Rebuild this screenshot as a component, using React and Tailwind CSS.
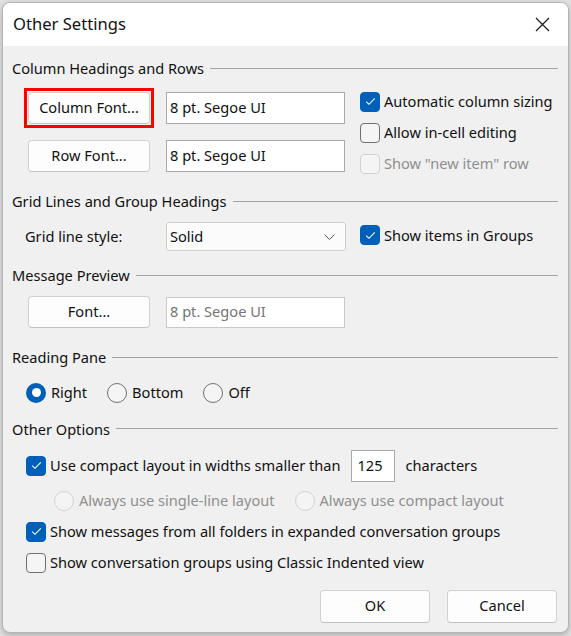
import React from 'react';

// Win11-style "Other Settings" dialog (Outlook view settings)

const Checkbox = ({ checked, disabled }) => (
  <span
    className={
      checked
        ? 'flex h-[20px] w-[20px] shrink-0 items-center justify-center rounded-[4px] border border-[#005fb8] bg-[#005fb8]'
        : disabled
        ? 'flex h-[20px] w-[20px] shrink-0 items-center justify-center rounded-[4px] border border-[#d2d2d2] bg-[#f4f4f4]'
        : 'flex h-[20px] w-[20px] shrink-0 items-center justify-center rounded-[4px] border border-[#707070] bg-[#f5f5f5]'
    }
  >
    {checked && (
      <svg width="11" height="9" viewBox="0 0 11 9">
        <path d="M1.2 4.6 4 7.3 9.8 1.4" fill="none" stroke="#fff" strokeWidth="1.1" />
      </svg>
    )}
  </span>
);

const Radio = ({ checked, disabled }) => (
  <span
    className={
      checked
        ? 'flex h-[20px] w-[20px] shrink-0 items-center justify-center rounded-full bg-[#005fb8]'
        : disabled
        ? 'flex h-[20px] w-[20px] shrink-0 items-center justify-center rounded-full border border-[#d2d2d2] bg-[#f4f4f4]'
        : 'flex h-[20px] w-[20px] shrink-0 items-center justify-center rounded-full border border-[#707070] bg-[#f5f5f5]'
    }
  >
    {checked && <span className="h-[9px] w-[9px] rounded-full bg-white" />}
  </span>
);

const CheckRow = ({ checked, disabled, label, className = '' }) => (
  <div className={`flex items-center gap-[4px] ${className}`}>
    <Checkbox checked={checked} disabled={disabled} />
    <span className={disabled ? 'text-[#8f8f8f]' : 'text-[#111]'}>{label}</span>
  </div>
);

const RadioItem = ({ checked, disabled, label }) => (
  <div className="flex items-center gap-[5px]">
    <Radio checked={checked} disabled={disabled} />
    <span className={disabled ? 'text-[#8f8f8f]' : 'text-[#111]'}>{label}</span>
  </div>
);

const GroupHeader = ({ title, className = '' }) => (
  <div className={`flex h-[20px] items-center gap-[6px] ${className}`}>
    <span className="leading-[20px] text-[#111]">{title}</span>
    <span className="h-px flex-1 bg-[#a3a3a3]" />
  </div>
);

const DlgButton = ({ children, className = '' }) => (
  <button
    type="button"
    className={`flex items-center justify-center rounded-[4px] border border-[#d0d0d0] border-b-[#c2c2c2] bg-[#fdfdfd] text-[#111] ${className}`}
  >
    {children}
  </button>
);

const TextBox = ({ value, disabled, className = '' }) => (
  <div
    className={
      disabled
        ? `flex items-center border border-[#c9c9c9] bg-white pl-[3px] text-[#757575] ${className}`
        : `flex items-center border border-[#a9a9a9] bg-white pl-[3px] text-[#111] ${className}`
    }
  >
    {value}
  </div>
);

export default function App() {
  return (
    <div className="h-[636px] w-[571px] overflow-hidden bg-[#e2e2e2] px-[2px] pt-[2px] font-['Noto_Sans',sans-serif] text-[14.6px]">
      <div className="flex h-[631px] flex-col overflow-hidden rounded-[8px] border border-[#b4b4b4] bg-[#f0f0f0] shadow-[0_2px_6px_rgba(0,0,0,0.25)]">
        {/* title bar */}
        <div className="flex h-[43px] shrink-0 items-center justify-between bg-white pl-[10px] pr-[18px]">
          <span className="text-[16.6px] text-[#111]">Other Settings</span>
          <svg width="15" height="15" viewBox="0 0 15 15">
            <path d="M1 1 14 14M14 1 1 14" stroke="#1a1a1a" strokeWidth="1.2" />
          </svg>
        </div>

        <div className="flex flex-1 flex-col pl-[9px] pr-[10px] pt-[12px]">
          <GroupHeader title="Column Headings and Rows" />

          <div className="ml-[12px] mt-[10px] flex items-start">
            <div className="flex flex-col">
              <div className="flex items-center">
                <div className="w-[142px]">
                  <div className="w-[130px] border-[3px] border-[#ff0000] p-[1px]">
                    <DlgButton className="h-[32px] w-[122px]">Column Font...</DlgButton>
                  </div>
                </div>
                <TextBox value="8 pt. Segoe UI" className="h-[32px] w-[179px]" />
              </div>
              <div className="mt-[12px] flex items-center">
                <div className="w-[142px] pl-[4px]">
                  <DlgButton className="h-[32px] w-[122px]">Row Font...</DlgButton>
                </div>
                <TextBox value="8 pt. Segoe UI" className="h-[32px] w-[179px]" />
              </div>
            </div>
            <div className="-mt-[2px] ml-[15px] flex flex-col">
              <CheckRow checked label="Automatic column sizing" className="h-[31px]" />
              <CheckRow label="Allow in-cell editing" className="h-[31px]" />
              <CheckRow disabled label='Show "new item" row' className="h-[31px]" />
            </div>
          </div>

          <GroupHeader title="Grid Lines and Group Headings" className="mt-[12px]" />
          <div className="ml-[13px] mt-[11px] flex items-center">
            <span className="w-[141px] text-[#111]">Grid line style:</span>
            <div className="flex h-[29px] w-[180px] items-center justify-between rounded-[3px] border border-[#cfcfcf] bg-[#fbfbfb] pl-[3px] pr-[10px] text-[#111]">
              <span>Solid</span>
              <svg width="11" height="6" viewBox="0 0 11 6">
                <path d="M.5.5 5.5 5.5 10.5.5" fill="none" stroke="#5c5c5c" strokeWidth="1" />
              </svg>
            </div>
            <CheckRow checked label="Show items in Groups" className="ml-[14px] -mt-[2px]" />
          </div>

          <GroupHeader title="Message Preview" className="mt-[14px]" />
          <div className="ml-[16px] mt-[11px] flex items-center gap-[16px]">
            <DlgButton className="h-[32px] w-[122px]">Font...</DlgButton>
            <TextBox disabled value="8 pt. Segoe UI" className="h-[31px] w-[179px]" />
          </div>

          <GroupHeader title="Reading Pane" className="mt-[19px]" />
          <div className="ml-[14px] mt-[15px] flex items-center gap-[20px]">
            <RadioItem checked label="Right" />
            <RadioItem label="Bottom" />
            <RadioItem label="Off" />
          </div>

          <GroupHeader title="Other Options" className="mt-[15px]" />
          <div className="ml-[14px] mt-[11px] flex h-[32px] items-center">
            <CheckRow checked label="Use compact layout in widths smaller than" />
            <div className="ml-[11px] flex h-[32px] w-[44px] items-center border border-[#a9a9a9] bg-white pl-[5px] text-[#111]">
              125
            </div>
            <span className="ml-[10px] text-[#111]">characters</span>
          </div>
          <div className="ml-[42px] mt-[9px] flex h-[20px] items-center gap-[20px]">
            <RadioItem disabled label="Always use single-line layout" />
            <RadioItem disabled label="Always use compact layout" />
          </div>
          <CheckRow checked label="Show messages from all folders in expanded conversation groups" className="ml-[14px] mt-[11px] h-[20px]" />
          <CheckRow label="Show conversation groups using Classic Indented view" className="ml-[14px] mt-[11px] h-[20px]" />

          <div className="mt-[17px] flex justify-end gap-[17px] pr-px">
            <DlgButton className="h-[33px] w-[110px]">OK</DlgButton>
            <DlgButton className="h-[33px] w-[110px]">Cancel</DlgButton>
          </div>
        </div>
      </div>
    </div>
  );
}
